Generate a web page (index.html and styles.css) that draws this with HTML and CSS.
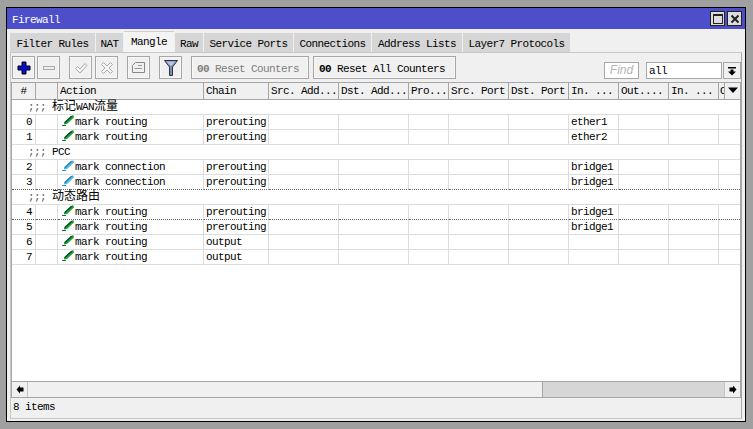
FILE: index.html
```html
<!DOCTYPE html>
<html lang="zh">
<head>
<meta charset="utf-8">
<title>Firewall</title>
<link rel="stylesheet" href="styles.css">
</head>
<body>
<svg class="defs" width="0" height="0">
  <defs>
    <symbol id="pen-green" viewBox="0 0 13 11">
      <path d="M0 10 H4 V11 H0 Z" fill="#0f7a2c"/>
      <path d="M2 9.5 L2.5 7 L9 1 L11.5 0.5 L12 2.5 L5 9 Z" fill="#1fa543"/>
      <path d="M2.5 7 L9 1 L11.5 0.5 L4 7.5 L2.5 9 Z" fill="#0c4a1c"/>
    </symbol>
    <symbol id="pen-blue" viewBox="0 0 13 11">
      <path d="M0 10 H4 V11 H0 Z" fill="#1c9ad4"/>
      <path d="M2 9.5 L2.5 7 L9 1 L11.5 0.5 L12 2.5 L5 9 Z" fill="#58bce8"/>
      <path d="M2.5 7 L9 1 L11 0.8 L4 7.5 L2.5 9 Z" fill="#2a7fa8"/>
    </symbol>
  </defs>
</svg>
<div class="window">
  <header class="titlebar">
    <span class="title">Firewall</span>
    <span class="winbtns">
      <span class="winbtn"><svg width="12" height="12" viewBox="0 0 12 12"><rect x="1.5" y="1.5" width="9" height="9" fill="none" stroke="#222" stroke-width="1"/><rect x="1" y="1" width="10" height="2" fill="#222"/></svg></span>
      <span class="winbtn"><svg width="12" height="12" viewBox="0 0 12 12"><path d="M2.5 2.5 L9.5 9.5 M9.5 2.5 L2.5 9.5" stroke="#222" stroke-width="2"/></svg></span>
    </span>
  </header>
  <nav class="tabs">
    <span class="tab t1">Filter Rules</span>
    <span class="tab t2">NAT</span>
    <span class="tab active t3">Mangle</span>
    <span class="tab t4">Raw</span>
    <span class="tab t5">Service Ports</span>
    <span class="tab t6">Connections</span>
    <span class="tab t7">Address Lists</span>
    <span class="tab t8">Layer7 Protocols</span>
  </nav>
  <main class="panel">
    <div class="toolbar">
      <button class="tb gap-s"><svg width="14" height="14" viewBox="0 0 14 14"><path d="M5 1 H9 V5 H13 V9 H9 V13 H5 V9 H1 V5 H5 Z" fill="#0b0bd0" stroke="#000" stroke-width="1"/></svg></button>
      <button class="tb gap-l"><svg width="14" height="8" viewBox="0 0 14 8"><rect x="1.5" y="2.5" width="11" height="3" fill="#eee" stroke="#aaa"/></svg></button>
      <button class="tb gap-m"><svg width="14" height="14" viewBox="0 0 14 14"><path d="M1.5 7.5 L3.5 5.5 L6 8 L11 2.5 L13 4.5 L6 12 Z" fill="#f4f4f4" stroke="#aaa"/></svg></button>
      <button class="tb gap-l"><svg width="14" height="14" viewBox="0 0 14 14"><path d="M1.5 3.5 L3.5 1.5 L7 5 L10.5 1.5 L12.5 3.5 L9 7 L12.5 10.5 L10.5 12.5 L7 9 L3.5 12.5 L1.5 10.5 L5 7 Z" fill="#f4f4f4" stroke="#aaa"/></svg></button>
      <button class="tb gap-l"><svg width="15" height="13" viewBox="0 0 15 13"><path d="M4.5 1.5 H13.5 V11.5 H1.5 V4.5 Z" fill="#f0f0f0" stroke="#888"/><path d="M7 4.5 H11 M3.5 7.5 H11" stroke="#999"/></svg></button>
      <button class="tb gap-l"><svg width="14" height="16" viewBox="0 0 14 16"><path d="M0.5 0.5 H13.5 L8.5 7 V15.5 H5.5 V7 Z" fill="#7f8cb4" stroke="#2c3040"/><path d="M2.5 1.5 H11.5 L8 5.5 H6 Z" fill="#b8c4e4"/></svg></button>
      <button class="tb text disabled rc"><b class="zero">00</b> Reset Counters</button>
      <button class="tb text ra"><b class="zero">00</b> Reset All Counters</button>
      <span class="spacer"></span>
      <span class="find">Find</span>
      <span class="select">all</span>
      <span class="selbtn"><svg width="10" height="10" viewBox="0 0 10 10"><rect x="1" y="1" width="8" height="1.5" fill="#000"/><path d="M3.5 3.5 H6.5 V5.5 H9 L5 9.5 L1 5.5 H3.5 Z" fill="#000"/></svg></span>
    </div>
    <div class="list">
      <table class="grid">
        <colgroup>
          <col class="c-num"><col class="c-flag"><col class="c-action"><col class="c-chain">
          <col class="c-addr"><col class="c-addr"><col class="c-proto"><col class="c-port"><col class="c-port">
          <col class="c-if"><col class="c-if"><col class="c-if"><col class="c-o"><col class="c-menu">
        </colgroup>
        <thead>
          <tr>
            <th class="center">#</th><th></th><th>Action</th><th>Chain</th><th>Src. Add...</th><th>Dst. Add...</th><th>Pro...</th><th>Src. Port</th><th>Dst. Port</th><th>In. ...</th><th>Out....</th><th>In. ...</th><th class="clip">O</th>
            <th class="menu"><svg width="12" height="7" viewBox="0 0 12 7"><path d="M1 0.5 H11 L6 6 Z" fill="#000"/></svg></th>
          </tr>
        </thead>
        <tbody>
          <tr class="comment"><td colspan="14"><span class="semi">;;;</span><span class="ctext"><span class="cjk">标记</span>WAN<span class="cjk">流量</span></span></td></tr>
          <tr><td class="n">0</td><td></td><td class="act"><svg class="pen"><use href="#pen-green"/></svg>mark routing</td><td>prerouting</td><td></td><td></td><td></td><td></td><td></td><td>ether1</td><td></td><td></td><td class="last" colspan="2"></td></tr>
          <tr><td class="n">1</td><td></td><td class="act"><svg class="pen"><use href="#pen-green"/></svg>mark routing</td><td>prerouting</td><td></td><td></td><td></td><td></td><td></td><td>ether2</td><td></td><td></td><td class="last" colspan="2"></td></tr>
          <tr class="comment"><td colspan="14"><span class="semi">;;;</span><span class="ctext">PCC</span></td></tr>
          <tr><td class="n">2</td><td></td><td class="act"><svg class="pen"><use href="#pen-blue"/></svg>mark connection</td><td>prerouting</td><td></td><td></td><td></td><td></td><td></td><td>bridge1</td><td></td><td></td><td class="last" colspan="2"></td></tr>
          <tr class="dotted"><td class="n">3</td><td></td><td class="act"><svg class="pen"><use href="#pen-blue"/></svg>mark connection</td><td>prerouting</td><td></td><td></td><td></td><td></td><td></td><td>bridge1</td><td></td><td></td><td class="last" colspan="2"></td></tr>
          <tr class="comment"><td colspan="14"><span class="semi">;;;</span><span class="ctext"><span class="cjk">动态路由</span></span></td></tr>
          <tr class="dotted"><td class="n">4</td><td></td><td class="act"><svg class="pen"><use href="#pen-green"/></svg>mark routing</td><td>prerouting</td><td></td><td></td><td></td><td></td><td></td><td>bridge1</td><td></td><td></td><td class="last" colspan="2"></td></tr>
          <tr><td class="n">5</td><td></td><td class="act"><svg class="pen"><use href="#pen-green"/></svg>mark routing</td><td>prerouting</td><td></td><td></td><td></td><td></td><td></td><td>bridge1</td><td></td><td></td><td class="last" colspan="2"></td></tr>
          <tr><td class="n">6</td><td></td><td class="act"><svg class="pen"><use href="#pen-green"/></svg>mark routing</td><td>output</td><td></td><td></td><td></td><td></td><td></td><td></td><td></td><td></td><td class="last" colspan="2"></td></tr>
          <tr><td class="n">7</td><td></td><td class="act"><svg class="pen"><use href="#pen-green"/></svg>mark routing</td><td>output</td><td></td><td></td><td></td><td></td><td></td><td></td><td></td><td></td><td class="last" colspan="2"></td></tr>
        </tbody>
      </table>
    </div>
    <div class="scrollbar">
      <span class="arrow"><svg width="8" height="9" viewBox="0 0 8 9"><path d="M0.5 4.5 L4 0.5 V2.5 H7.5 V6.5 H4 V8.5 Z" fill="#000"/></svg></span>
      <span class="thumb"></span>
      <span class="track"></span>
      <span class="arrow right"><svg width="8" height="9" viewBox="0 0 8 9"><path d="M7.5 4.5 L4 0.5 V2.5 H0.5 V6.5 H4 V8.5 Z" fill="#000"/></svg></span>
    </div>
    <footer class="status">8 items</footer>
  </main>
</div>
</body>
</html>
```
FILE: styles.css
```css
* { box-sizing: border-box; }
html, body { margin: 0; height: 100%; }
body {
  background: #a0a0a0;
  padding: 7px 0 0 6px;
  font: 11px/15px "Liberation Mono", "Noto Sans CJK SC", monospace;
  letter-spacing: -0.6px;
  color: #000;
  overflow: hidden;
}
.defs { position: absolute; }
.window {
  width: 740px;
  height: 415px;
  border: 1px solid #000;
  background: #f0f0f0;
  display: flex;
  flex-direction: column;
}
.titlebar {
  height: 21px;
  flex: none;
  background: #4c4fc9;
  color: #fff;
  display: flex;
  align-items: center;
  justify-content: space-between;
  padding: 0 3px 0 5px;
}
.title { margin-top: 3px; }
.winbtns { display: flex; gap: 2px; }
.winbtn {
  width: 15px;
  height: 15px;
  background: #dcdcdc;
  border: 1px solid #222;
  display: flex;
  align-items: center;
  justify-content: center;
}
.tabs {
  height: 23px;
  flex: none;
  display: flex;
  align-items: flex-end;
  padding-left: 3px;
}
.tab {
  height: 19px;
  background: #d6d6d6;
  margin-right: 1px;
  padding-top: 4px;
  display: flex;
  align-items: center;
  justify-content: center;
}
.tab.active {
  height: 21px;
  background: #f4f4f4;
  border-top: 1px solid #d0d0d0;
  padding-top: 1px;
  padding-bottom: 1px;
}
.t1 { width: 85px; }
.t2 { width: 27px; }
.t3 { width: 50px; }
.t4 { width: 28px; }
.t5 { width: 89px; }
.t6 { width: 77px; }
.t7 { width: 90px; }
.t8 { width: 107px; margin-right: 0; }
.panel {
  flex: 1;
  min-height: 0;
  margin: 0 3px 2px 3px;
  border: 1px solid #c8c8c8;
  border-right-color: #a8a8a8;
  display: flex;
  flex-direction: column;
}
.toolbar {
  height: 29px;
  flex: none;
  display: flex;
  align-items: flex-start;
  padding: 3px 0 0 1px;
}
.tb {
  height: 23px;
  width: 23px;
  padding: 0;
  border: 1px solid #a6a6a6;
  box-shadow: inset 0 0 0 1px #f8f8f8;
  background: #f0f0f0;
  display: flex;
  align-items: center;
  justify-content: center;
  font: inherit;
  letter-spacing: inherit;
  color: #000;
}
.gap-s { margin-right: 2px; }
.gap-m { margin-right: 3px; }
.gap-l { margin-right: 9px; }
.tb.text { justify-content: flex-start; padding: 3px 0 0 5px; gap: 6px; }
.rc { width: 118px; margin-right: 4px; }
.ra { width: 143px; }
.disabled { color: #808080; }
.zero { font-weight: bold; color: inherit; }
.spacer { flex: 1; }
.find {
  width: 35px;
  height: 17px;
  margin: 6px 7px 0 0;
  background: #fff;
  border: 1px solid #a6a6a6;
  color: #b4b4b4;
  font: italic 12px/15px "Liberation Sans", sans-serif;
  letter-spacing: 0;
  text-align: center;
}
.select {
  width: 76px;
  height: 17px;
  margin: 6px 1px 0 0;
  background: #fff;
  border: 1px solid #a6a6a6;
  padding-left: 2px;
  line-height: 17px;
}
.selbtn {
  width: 18px;
  height: 17px;
  margin: 6px 0 0 0;
  background: #f0f0f0;
  border: 1px solid #a6a6a6;
  display: flex;
  align-items: center;
  justify-content: center;
}
.list {
  flex: 1;
  min-height: 0;
  background: #fff;
  border: 1px solid #a6a6a6;
  border-bottom: 0;
  overflow: hidden;
}
.grid {
  table-layout: fixed;
  border-collapse: separate;
  border-spacing: 0;
  width: 728px;
}
.c-num { width: 24px; }
.c-flag { width: 22px; }
.c-action { width: 146px; }
.c-chain { width: 65px; }
.c-addr { width: 70px; }
.c-proto { width: 40px; }
.c-port { width: 60px; }
.c-if { width: 50px; }
.c-o { width: 6px; }
.c-menu { width: 15px; }
th {
  height: 17px;
  padding: 1px 0 0 2px;
  font-weight: normal;
  text-align: left;
  line-height: 15px;
  background: #f0f0f0;
  border-right: 1px solid #a6a6a6;
  border-bottom: 1px solid #a6a6a6;
  white-space: nowrap;
  overflow: hidden;
}
th.center { text-align: center; padding: 1px 0 0; }
th.clip { padding-left: 1px; }
th.menu { padding: 0 0 0 2px; border-right: 0; }
td {
  height: 15px;
  padding: 0 0 0 2px;
  line-height: 14px;
  border-right: 1px solid #dcdcdc;
  border-bottom: 1px solid #dcdcdc;
  white-space: nowrap;
  overflow: hidden;
}
td.n { text-align: right; padding: 0 3px 0 0; }
td.act { padding-left: 4px; }
td.last { border-right: 0; }
.pen { width: 13px; height: 11px; vertical-align: -1px; }
.comment td { border-right: 0; padding-left: 16px; overflow: visible; }
.semi { color: #555; }
.ctext { margin-left: 6px; }
.cjk { font: 12px/1px "Noto Sans CJK SC", sans-serif; letter-spacing: 0; }
.dotted td { border-bottom: 1px dotted #666; }
.scrollbar {
  height: 17px;
  flex: none;
  display: flex;
  border: 1px solid #a6a6a6;
}
.arrow {
  width: 16px;
  flex: none;
  display: flex;
  align-items: center;
  justify-content: center;
  background: #f0f0f0;
  border-right: 1px solid #c4c4c4;
}
.arrow.right { border-right: 0; border-left: 1px solid #c4c4c4; }
.thumb { width: 515px; flex: none; background: #f0f0f0; border-right: 1px solid #a6a6a6; }
.track { flex: 1; background: #d6d6d6; }
.status {
  height: 20px;
  flex: none;
  padding-left: 2px;
  line-height: 18px;
}
```
